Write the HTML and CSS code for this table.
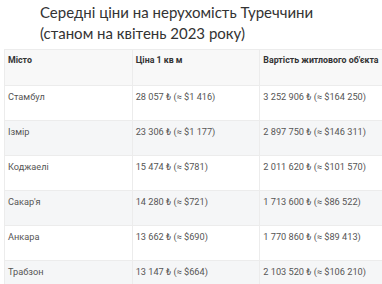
FILE: index.html
```html
<!DOCTYPE html>
<html lang="uk">
<head>
<meta charset="utf-8">
<link rel="stylesheet" href="styles.css">
</head>
<body>
<h2 class="title">Середні ціни на нерухомість Туреччини<br>(станом на квітень 2023 року)</h2>
<table class="prices">
  <thead>
    <tr><th>Місто</th><th>Ціна 1 кв м</th><th>Вартість житлового об'єкта</th></tr>
  </thead>
  <tbody>
    <tr><td>Стамбул</td><td>28 057 ₺ (≈ $1 416)</td><td>3 252 906 ₺ (≈ $164 250)</td></tr>
    <tr><td>Ізмір</td><td>23 306 ₺ (≈ $1 177)</td><td>2 897 750 ₺ (≈ $146 311)</td></tr>
    <tr><td>Коджаелі</td><td>15 474 ₺ (≈ $781)</td><td>2 011 620 ₺ (≈ $101 570)</td></tr>
    <tr><td>Сакар'я</td><td>14 280 ₺ (≈ $721)</td><td>1 713 600 ₺ (≈ $86 522)</td></tr>
    <tr><td>Анкара</td><td>13 662 ₺ (≈ $690)</td><td>1 770 860 ₺ (≈ $89 413)</td></tr>
    <tr><td>Трабзон</td><td>13 147 ₺ (≈ $664)</td><td>2 103 520 ₺ (≈ $106 210)</td></tr>
  </tbody>
</table>
</body>
</html>
```

FILE: styles.css
```css
html, body {
  margin: 0;
  padding: 0;
  background: #ffffff;
  overflow: hidden;
}
body {
  padding: 2px 0 0 4px;
  width: 390px;
}
.title {
  margin: 0 0 0 36px;
  font-family: Lato, "Open Sans", sans-serif;
  font-weight: 400;
  font-size: 15px;
  line-height: 21px;
  color: #333333;
}
.prices {
  margin-top: 5px;
  width: 384px;
  table-layout: fixed;
  border-collapse: collapse;
  font-family: Roboto, "Liberation Sans", sans-serif;
  font-size: 9.2px;
  color: #555555;
}
.prices tr {
  height: 35px;
}
.prices thead tr {
  height: 36px;
}
.prices th, .prices td {
  text-align: left;
  vertical-align: top;
  padding: 5px 3px 0 3px;
  border: 1px solid #ececec;
  line-height: 11px;
}
.prices th {
  font-weight: 700;
  font-size: 8.8px;
  color: #333333;
  background: #f8f8f8;
}
.prices tbody tr:nth-child(even) td {
  background: #f5f6f7;
}
```
